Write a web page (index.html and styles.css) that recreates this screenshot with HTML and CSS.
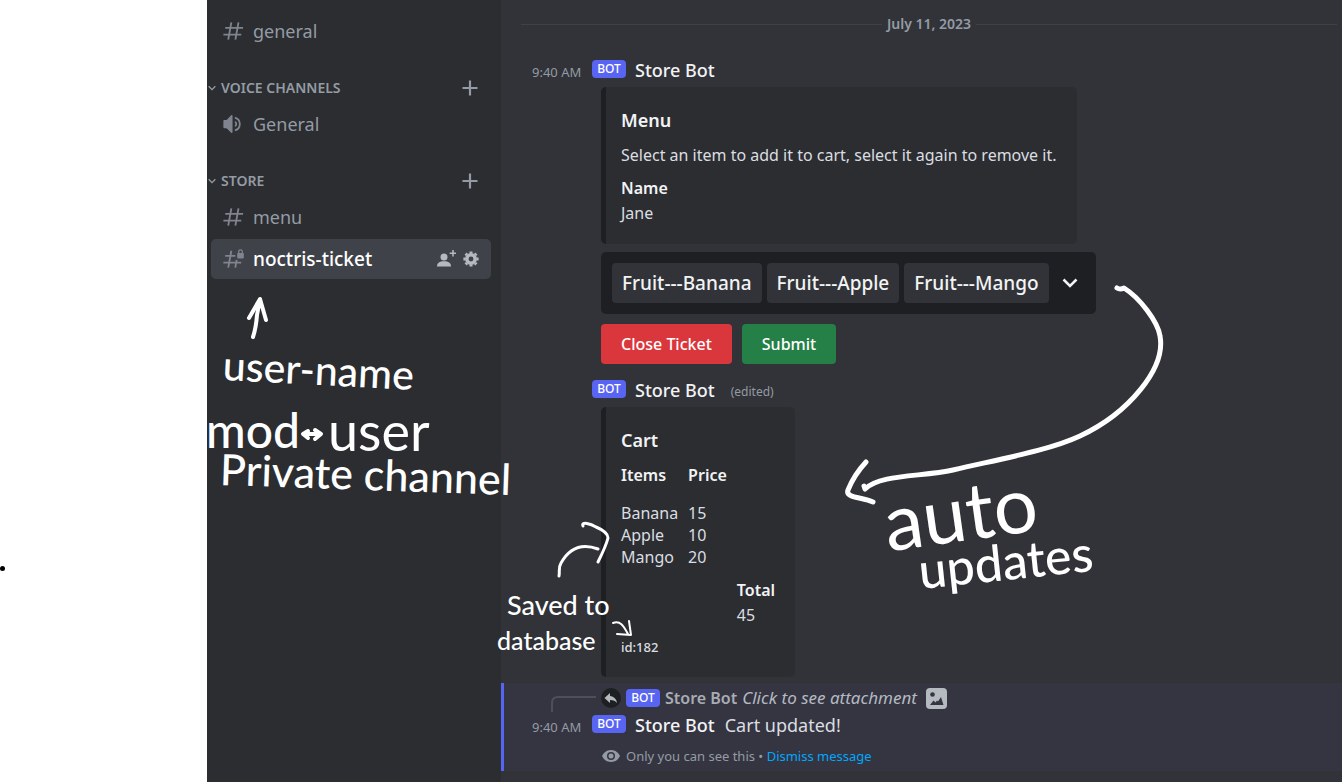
FILE: index.html
```html
<!DOCTYPE html>
<html lang="en">
<head>
<meta charset="utf-8">
<title>Store ticket channel</title>
<link rel="stylesheet" href="styles.css">
</head>
<body>
<svg class="defs" aria-hidden="true">
  <symbol id="hash" viewBox="0 0 24 24"><path d="M3.500 8.500h19.500M1.500 16h19.500M10.200 2.500 6.800 21.500M18 2.500 14.600 21.500" fill="none" stroke="currentColor" stroke-width="2"/></symbol>
  <symbol id="caret" viewBox="0 0 12 12"><path d="m2 4 4 4 4-4" fill="none" stroke="currentColor" stroke-width="1.600"/></symbol>
  <symbol id="plus" viewBox="0 0 16 16"><path d="M8 .5v15M.5 8h15" fill="none" stroke="currentColor" stroke-width="2.200"/></symbol>
</svg>
<div class="page">
  <div class="margin"><span class="dot"></span></div>

  <nav class="sidebar" aria-label="Channels">
    <a class="channel" href="#general"><svg class="icon"><use href="#hash"/></svg><span>general</span></a>
    <div class="category"><svg class="caret"><use href="#caret"/></svg><h2>VOICE CHANNELS</h2><button aria-label="Create voice channel"><svg class="plus"><use href="#plus"/></svg></button></div>
    <a class="channel" href="#voice"><svg class="icon" viewBox="0 0 24 24"><path d="M11.500 3.200v17.600c0 1-.9 1.300-1.500.7L5 16.500H2.500c-.6 0-1-.4-1-1v-7c0-.6.4-1 1-1H5l5-5c.6-.6 1.500-.3 1.500.7Z" fill="currentColor"/><path d="M14 8.700a3.400 3.400 0 0 1 0 6.600v-2.200a1.300 1.300 0 0 0 0-2.200ZM14 4a8.200 8.200 0 0 1 0 16v-2.200a6 6 0 0 0 0-11.600Z" fill="currentColor"/></svg><span>General</span></a>
    <div class="category"><svg class="caret"><use href="#caret"/></svg><h2>STORE</h2><button aria-label="Create store channel"><svg class="plus"><use href="#plus"/></svg></button></div>
    <a class="channel" href="#menu"><svg class="icon"><use href="#hash"/></svg><span>menu</span></a>
    <div class="channel active">
      <a href="#ticket"><svg class="icon" viewBox="0 0 24 24"><path d="M3.500 8.500h11M1.500 16h19.500M10.200 3 6.800 21.500M16 13l-1.500 8.500" fill="none" stroke="currentColor" stroke-width="2"/><path d="M17.500 5.500V4a2.700 2.700 0 0 1 5.400 0v1.500c.5 0 .9.400.9.900v4c0 .6-.4 1-1 1h-5.200c-.6 0-1-.4-1-1v-4c0-.5.4-.9.900-.9Zm1.400 0h2.600V4a1.300 1.300 0 0 0-2.600 0Z" fill="currentColor"/></svg><span>noctris-ticket</span></a>
      <button aria-label="Invite people"><svg class="invite" viewBox="0 0 20 18"><circle cx="8" cy="7" r="3.500" fill="currentColor"/><path d="M1 16.500c0-3.800 2.700-5.200 7-5.200s7 1.400 7 5.200Z" fill="currentColor"/><path d="M17 0v6.500M13.700 3.200h6.300" stroke="currentColor" stroke-width="1.500"/></svg></button>
      <button aria-label="Channel settings"><svg class="gear" viewBox="0 0 16 16"><circle cx="8" cy="8" r="4.200" fill="none" stroke="currentColor" stroke-width="3.500"/><path d="M8 .4v2M8 13.600v2M.4 8h2M13.600 8h2M2.600 2.600 4 4M12 12l1.400 1.400M2.600 13.400 4 12M12 4l1.400-1.400" stroke="currentColor" stroke-width="3"/></svg></button>
    </div>
  </nav>

  <main class="chat">
    <div class="divider"><time datetime="2023-07-11">July 11, 2023</time></div>

    <article class="message">
      <header class="head"><time>9:40 AM</time><span class="bot">BOT</span><h3>Store Bot</h3></header>
      <section class="embed embed-menu">
        <h4>Menu</h4>
        <p>Select an item to add it to cart, select it again to remove it.</p>
        <dl><dt>Name</dt><dd>Jane</dd></dl>
      </section>
      <button class="picker" aria-label="Selected items">
        <span class="chip">Fruit---Banana</span><span class="chip">Fruit---Apple</span><span class="chip">Fruit---Mango</span>
        <svg class="chevron" viewBox="0 0 20 20"><path d="m3.500 6.500 6.500 6.500 6.500-6.500" fill="none" stroke="currentColor" stroke-width="2.500"/></svg>
      </button>
      <div class="actions"><button class="btn danger">Close Ticket</button><button class="btn success">Submit</button></div>
    </article>

    <article class="message second">
      <header class="head"><time></time><span class="bot">BOT</span><h3>Store Bot</h3><small>(edited)</small></header>
      <section class="embed embed-cart">
        <h4>Cart</h4>
        <table>
          <thead><tr><th scope="col">Items</th><th scope="col">Price</th><td></td></tr></thead>
          <tbody>
            <tr><td>Banana</td><td>15</td><td></td></tr>
            <tr><td>Apple</td><td>10</td><td></td></tr>
            <tr><td>Mango</td><td>20</td><td></td></tr>
          </tbody>
          <tfoot>
            <tr><td></td><td></td><th scope="col">Total</th></tr>
            <tr><td></td><td></td><td>45</td></tr>
          </tfoot>
        </table>
        <footer>id:182</footer>
      </section>
    </article>

    <article class="notice">
      <div class="reply">
        <svg class="spine" viewBox="0 0 46 18"><path d="M1 17V8q0-6 6-6h38" fill="none" stroke="currentColor" stroke-width="2"/></svg>
        <svg class="reply-icon" viewBox="0 0 20 20"><circle cx="10" cy="10" r="10" fill="#1e1f22"/><path d="M9 5 3.500 10 9 15v-3c3.500 0 5.500 1 7 3-.5-4-3-6.500-7-7Z" fill="#b5bac1"/></svg>
        <span class="bot">BOT</span><strong>Store Bot</strong><em>Click to see attachment</em>
        <svg class="picture" viewBox="0 0 21 21"><rect width="21" height="21" rx="4" fill="#b5bac1"/><circle cx="6.500" cy="6.500" r="2.300" fill="#343541"/><path d="m4 17 3.500-4.500 2 2 1.500-2 1 1L15 9l2.500 8Z" fill="#343541"/></svg>
      </div>
      <header class="head"><time>9:40 AM</time><span class="bot">BOT</span><h3>Store Bot</h3><p>Cart updated!</p></header>
      <div class="private">
        <svg class="eye" viewBox="0 0 20 14"><path d="M10 1C5.500 1 2.400 4 1 7c1.400 3 4.500 6 9 6s7.600-3 9-6c-1.400-3-4.500-6-9-6Z" fill="currentColor"/><circle cx="10" cy="7" r="4" fill="#343541"/><circle cx="10" cy="7" r="2.500" fill="currentColor"/></svg>
        <p>Only you can see this • <a href="#dismiss">Dismiss message</a></p>
      </div>
    </article>
  </main>

  <div class="notes">
    <svg class="arrows" viewBox="0 0 1342 782" aria-hidden="true">
      <g fill="none" stroke="#fff" stroke-linecap="round" stroke-linejoin="round">
        <path stroke-width="4" d="M253 337Q256 328 257 315L260 299M249 318 260 299 266 320"/>
        <path stroke-width="4" d="M304 434h15M308 431l-5 3 5 4M315 430l6 4-6 5"/>
        <path stroke-width="5" d="M1117 288Q1120 290 1124 288C1140 298 1158 322 1160 336C1166 368 1129 413 1080 436C1050 450 1005 458 953 470C922 477 880 474 865 489L864 486M866 462Q854 475 848 490C845 498 862 497 873 502"/>
        <path stroke-width="3" d="M559 576C560 571 558 568 561 563Q574 540 598 549M583 526C581 521 591 524 596 527Q608 532 608 538Q606 546 598 562"/>
        <path stroke-width="2" d="M613 623C621 620 624 627 628 634M629 621 631 635 617 634"/>
      </g>
    </svg>
    <span class="note note-username">user-name</span>
    <span class="note note-mod">mod</span>
    <span class="note note-user">user</span>
    <span class="note note-private">Private channel</span>
    <span class="note note-saved">Saved to</span>
    <span class="note note-database">database</span>
    <span class="note note-auto">auto</span>
    <span class="note note-updates">updates</span>
  </div>
</div>
</body>
</html>
```
FILE: styles.css
```css
* { box-sizing: border-box; margin: 0; padding: 0; }
body { background: #fff; color: #dbdee1; font: 16px/22px "Noto Sans", "Open Sans", sans-serif; }
button { border: 0; background: none; color: inherit; font: inherit; cursor: pointer; }
a { color: inherit; text-decoration: none; }
svg { display: block; flex: none; }
.defs { position: absolute; width: 0; height: 0; }
.page { position: relative; display: grid; grid-template-columns: 207px 294px minmax(0, 1fr); min-height: 100vh; overflow: hidden; }
.margin { position: relative; }
.dot { position: absolute; top: 566px; left: 0; width: 5px; height: 5px; border-radius: 50%; background: #000; }

.sidebar { background: #2b2d31; color: #949ba4; padding: 11px 10px 0 4px; }
.channel { display: flex; align-items: center; height: 40px; padding: 0 12px 0 11px; border-radius: 5px; font-size: 18px; }
.channel .icon { width: 22px; height: 22px; margin-right: 9px; color: #80848e; }
.category { display: flex; align-items: center; height: 32px; margin: 21px 13px 0 -4px; }
.category h2 { flex: 1; font-size: 14px; font-weight: 600; }
.caret { width: 10px; height: 10px; margin-right: 4px; }
.plus { width: 16px; height: 16px; }
.channel.active { margin-top: 2px; background: #404249; color: #fff; font-size: 19px; font-weight: 500; gap: 7px; }
.active a { display: flex; align-items: center; flex: 1; }
.active button { color: #b5bac1; }
.invite { width: 20px; height: 18px; }
.gear { width: 16px; height: 16px; }

.chat { background: #313338; padding-top: 13px; }
.divider { display: flex; align-items: center; gap: 5px; margin: 0 5px 0 20px; color: #949ba4; font-size: 14px; font-weight: 600; }
.divider::before, .divider::after { content: ""; flex: 1; height: 1px; background: #3f4147; }
.message { padding: 22px 20px 0 31px; }
.message.second { padding-top: 13px; }
.head { display: flex; align-items: center; height: 26px; }
.head time { width: 60px; padding-top: 4px; color: #949ba4; font-size: 13px; }
.bot { flex: none; width: 34px; height: 18px; border-radius: 4px; background: #5865f2; color: #fff; font-size: 12px; line-height: 18px; font-weight: 500; text-align: center; }
.head .bot { margin: 0 9px 2px 0; }
h3 { color: #f2f3f5; font-size: 18px; font-weight: 500; }
.head small { margin-left: 16px; padding-top: 4px; color: #949ba4; font-size: 12px; }
.embed { width: fit-content; margin: 4px 0 0 69px; padding: 0 20px 0 15px; border-left: 5px solid #1e1f22; border-radius: 5px; background: #2b2d31; }
.embed h4 { color: #f2f3f5; font-size: 18px; font-weight: 600; }
.embed-menu { padding-top: 22px; padding-bottom: 20px; }
.embed-menu p { margin: 13px 0 11px; }
dt, th { color: #f2f3f5; font-weight: 600; text-align: left; }
dd { margin-top: 3px; }
.picker { display: flex; align-items: center; gap: 5px; width: fit-content; height: 62px; margin: 8px 0 0 69px; padding: 0 16px 0 11px; border-radius: 5px; background: #1e1f22; color: #f2f3f5; font-size: 19px; font-weight: 500; }
.chip { padding: 9px 10px; border-radius: 4px; background: #313338; }
.chevron { width: 20px; height: 20px; margin-left: 6px; }
.actions { display: flex; gap: 10px; margin: 10px 0 0 69px; }
.btn { height: 40px; padding: 0 20px; border-radius: 4px; color: #fff; font-weight: 500; }
.danger { background: #da373c; }
.success { background: #248046; }
.embed-cart { padding-top: 22px; padding-bottom: 19px; }
table { margin-top: 13px; border-collapse: collapse; }
td, th { height: 22px; padding: 0 10px 0 0; }
td:last-child, th:last-child { padding-right: 0; }
thead th { padding-bottom: 16px; }
tfoot tr:first-child > * { padding-top: 11px; }
tfoot tr:last-child > * { padding-top: 3px; }
.embed footer { margin-top: 10px; font-size: 13px; font-weight: 500; }

.notice { height: 88px; margin-top: 6px; padding-left: 28px; border-left: 3px solid #5865f2; background: #343541; }
.reply { display: flex; align-items: center; gap: 5px; height: 30px; padding-left: 19px; color: #a9acb3; }
.spine { align-self: flex-end; width: 46px; height: 18px; margin-right: -1px; color: #4e5058; }
.reply-icon { width: 20px; height: 20px; }
.reply strong { font-weight: 600; }
.reply em { color: #b5bac1; font-size: 17px; }
.picture { width: 21px; height: 21px; margin-left: 4px; }
.head p { margin-left: 10px; font-size: 18px; }
.notice .head { height: 24px; }
.private { display: flex; align-items: center; gap: 5px; margin: 8px 0 0 69px; color: #949ba4; font-size: 13px; }
.eye { width: 20px; height: 14px; }
.private a { color: #00a8fc; }

.notes { position: absolute; top: 0; left: 0; pointer-events: none; color: #fff; font-family: Lato, sans-serif; font-weight: 500; }
.arrows { width: 1342px; height: 782px; }
.note { position: absolute; line-height: 1; white-space: nowrap; }
.note-username { left: 223px; top: 349px; font-size: 41px; transform: rotate(3deg); }
.note-mod { left: 206px; top: 406px; font-size: 48px; }
.note-user { left: 328px; top: 404px; font-size: 54px; font-weight: 400; }
.note-private { left: 220px; top: 452px; font-size: 43px; transform: rotate(2deg); }
.note-saved { left: 507px; top: 591px; font-size: 27px; }
.note-database { left: 497px; top: 628px; font-size: 25px; }
.note-auto { left: 883px; top: 472px; font-size: 78px; font-weight: 400; transform: rotate(-8deg); }
.note-updates { left: 918px; top: 536px; font-size: 50px; transform: rotate(-6deg); }
```
